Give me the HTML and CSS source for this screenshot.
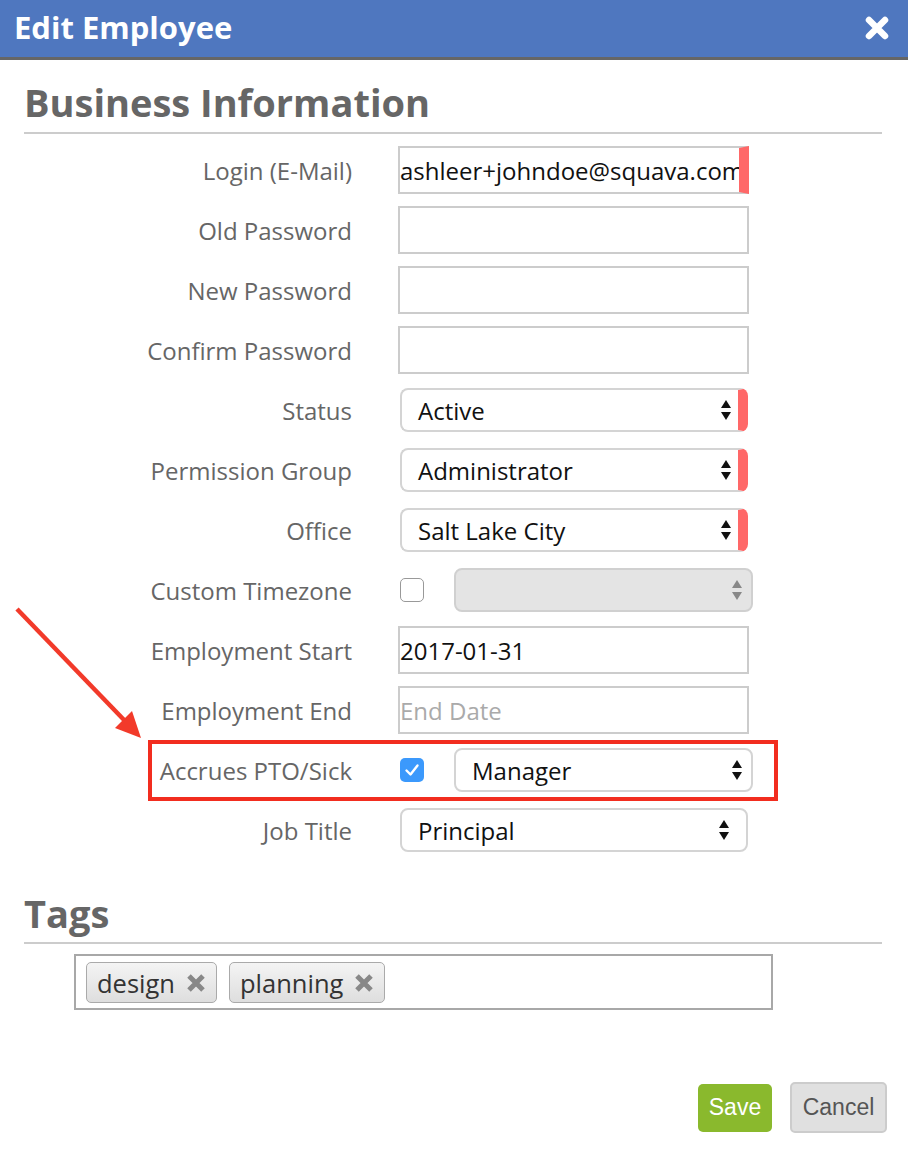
FILE: index.html
```html
<!DOCTYPE html>
<html lang="en">

<head>
    <meta charset="UTF-8">
    <meta name="viewport" content="width=device-width, initial-scale=1.0">
    <title>Edit Employee</title>
    <link rel="stylesheet" href="styles.css">
</head>

<body>

    <div class="modal">
        <div class="modal-header">
            <h1>Edit Employee</h1>
            <span class="close">
                <svg width="24" height="24" viewBox="0 0 24 24">
                    <path d="M4 4 L20 20 M20 4 L4 20" stroke="#fff" stroke-width="6.5" stroke-linecap="round" />
                </svg>
            </span>
        </div>

        <div class="modal-body">
            <h2 class="section-title">Business Information</h2>

            <div class="form">
                <div class="row">
                    <label>Login (E-Mail)</label>
                    <input class="text required" type="text" value="ashleer+johndoe@squava.com">
                </div>
                <div class="row">
                    <label>Old Password</label>
                    <input class="text" type="password">
                </div>
                <div class="row">
                    <label>New Password</label>
                    <input class="text" type="password">
                </div>
                <div class="row">
                    <label>Confirm Password</label>
                    <input class="text" type="password">
                </div>
                <div class="row">
                    <label>Status</label>
                    <div class="select required">
                        <span>Active</span>
                        <svg class="arrows" width="12" height="22" viewBox="0 0 12 22">
                            <path d="M6 1 L11 9 L1 9 Z M6 21 L11 13 L1 13 Z" fill="#111" />
                        </svg>
                    </div>
                </div>
                <div class="row">
                    <label>Permission Group</label>
                    <div class="select required">
                        <span>Administrator</span>
                        <svg class="arrows" width="12" height="22" viewBox="0 0 12 22">
                            <path d="M6 1 L11 9 L1 9 Z M6 21 L11 13 L1 13 Z" fill="#111" />
                        </svg>
                    </div>
                </div>
                <div class="row">
                    <label>Office</label>
                    <div class="select required">
                        <span>Salt Lake City</span>
                        <svg class="arrows" width="12" height="22" viewBox="0 0 12 22">
                            <path d="M6 1 L11 9 L1 9 Z M6 21 L11 13 L1 13 Z" fill="#111" />
                        </svg>
                    </div>
                </div>
                <div class="row">
                    <label>Custom Timezone</label>
                    <div class="combo">
                        <span class="checkbox"></span>
                        <div class="select wide disabled">
                            <span></span>
                            <svg class="arrows" width="12" height="22" viewBox="0 0 12 22">
                                <path d="M6 1 L11 9 L1 9 Z M6 21 L11 13 L1 13 Z" fill="#888" />
                            </svg>
                        </div>
                    </div>
                </div>
                <div class="row">
                    <label>Employment Start</label>
                    <input class="text" type="text" value="2017-01-31">
                </div>
                <div class="row">
                    <label>Employment End</label>
                    <input class="text" type="text" placeholder="End Date">
                </div>
                <div class="row highlighted">
                    <label>Accrues PTO/Sick</label>
                    <div class="combo">
                        <span class="checkbox checked">
                            <svg width="24" height="24" viewBox="0 0 24 24">
                                <path d="M6.5 12.5 L10.5 16.5 L17.5 7.5" fill="none" stroke="#fff" stroke-width="2.4" stroke-linecap="round" stroke-linejoin="round" />
                            </svg>
                        </span>
                        <div class="select wide">
                            <span>Manager</span>
                            <svg class="arrows" width="12" height="22" viewBox="0 0 12 22">
                                <path d="M6 1 L11 9 L1 9 Z M6 21 L11 13 L1 13 Z" fill="#111" />
                            </svg>
                        </div>
                    </div>
                    <div class="callout"></div>
                </div>
                <div class="row">
                    <label>Job Title</label>
                    <div class="select">
                        <span>Principal</span>
                        <svg class="arrows" width="12" height="22" viewBox="0 0 12 22">
                            <path d="M6 1 L11 9 L1 9 Z M6 21 L11 13 L1 13 Z" fill="#111" />
                        </svg>
                    </div>
                </div>
            </div>

            <h2 class="section-title tags-title">Tags</h2>

            <div class="tags">
                <span class="tag">design
                    <svg width="20" height="20" viewBox="0 0 20 20">
                        <path d="M3 3 L17 17 M17 3 L3 17" stroke="#888" stroke-width="5" />
                    </svg>
                </span>
                <span class="tag">planning
                    <svg width="20" height="20" viewBox="0 0 20 20">
                        <path d="M3 3 L17 17 M17 3 L3 17" stroke="#888" stroke-width="5" />
                    </svg>
                </span>
            </div>

            <div class="footer">
                <button class="btn save">Save</button>
                <button class="btn cancel">Cancel</button>
            </div>
        </div>

        <svg class="pointer" width="160" height="150" viewBox="0 0 160 150">
            <line x1="17" y1="9" x2="126" y2="122" stroke="#f23a2a" stroke-width="4.5" />
            <path d="M141 138 L115 128 L132 111 Z" fill="#f23a2a" />
        </svg>
    </div>

</body>

</html>
```

FILE: styles.css
```css
* {
    margin: 0;
    padding: 0;
    box-sizing: border-box;
}

html,
body {
    width: 100%;
    height: 100%;
    font-family: "Open Sans", "DejaVu Sans", sans-serif;
    background-color: #fff;
    overflow: hidden;
}

.modal {
    position: relative;
    width: 100%;
    height: 100%;
}

.modal-header {
    height: 60px;
    display: flex;
    align-items: center;
    justify-content: space-between;
    padding: 0 19px 3px 14px;
    background-color: #4f77bf;
    border-bottom: 3px solid #666;
}

.modal-header h1 {
    color: #fff;
    font-size: 31px;
    font-weight: 700;
}

.close {
    display: flex;
    margin-top: 1px;
}

.modal-body {
    padding: 0 26px 0 24px;
}

.section-title {
    margin-top: 19px;
    padding-bottom: 7px;
    font-size: 38px;
    line-height: 46px;
    font-weight: 700;
    color: #666;
    border-bottom: 2px solid #ccc;
}

.form {
    margin-top: 6px;
}

.row {
    position: relative;
    display: flex;
    align-items: center;
    height: 60px;
}

.row label {
    flex: none;
    width: 328px;
    margin-right: 46px;
    text-align: right;
    font-size: 24px;
    color: #666;
}

.text {
    width: 351px;
    height: 48px;
    padding: 0;
    border: 2px solid #ccc;
    outline: 0;
    font-family: "Open Sans", sans-serif;
    font-size: 24px;
    color: #111;
    background: #fff;
}

.text::placeholder {
    color: #aaa;
}

.text.required {
    border-right: 10px solid #ff6868;
}

.select {
    width: 348px;
    height: 44px;
    margin-left: 2px;
    display: flex;
    align-items: center;
    justify-content: space-between;
    padding: 0 16px 0 16px;
    border: 2px solid #d4d4d4;
    border-radius: 8px;
    font-size: 24px;
    color: #111;
    background: #fff;
}

.select.required {
    padding-right: 6px;
    border-right: 10px solid #ff6868;
}

.combo {
    display: flex;
    align-items: center;
    gap: 30px;
    margin-left: 2px;
}

.combo .select {
    margin-left: 0;
}

.select.wide {
    width: 299px;
    padding-right: 8px;
}

.select.disabled {
    background: #e4e4e4;
    border-color: #d0d0d0;
}

.checkbox {
    width: 24px;
    height: 24px;
    border: 1px solid #999;
    border-radius: 5px;
    background: #fff;
    display: flex;
}

.checkbox.checked {
    border: 0;
    background: #3b99fc;
}

.callout {
    position: absolute;
    left: 124px;
    top: 0;
    width: 630px;
    height: 61px;
    border: 4px solid #f22d1f;
}

.pointer {
    position: absolute;
    left: 0;
    top: 600px;
}

.tags-title {
    margin-top: 30px;
    padding-bottom: 6px;
}

.tags {
    margin: 10px 0 0 50px;
    width: 699px;
    height: 56px;
    display: flex;
    align-items: flex-start;
    gap: 12px;
    padding: 6px 10px;
    border: 2px solid #a8a8a8;
}

.tag {
    height: 41px;
    display: flex;
    align-items: center;
    gap: 11px;
    padding: 0 10px;
    font-size: 25.5px;
    color: #333;
    border: 1px solid #aaa;
    border-radius: 5px;
    background-image: linear-gradient(#f4f4f4, #dedede);
}

.footer {
    display: flex;
    justify-content: flex-end;
    align-items: center;
    gap: 18px;
    margin-top: 72px;
    margin-right: -5px;
}

.btn {
    cursor: pointer;
    font-family: "Liberation Sans", Arial, sans-serif;
    font-size: 23px;
    border-radius: 5px;
    outline: 0;
}

.save {
    width: 74px;
    height: 48px;
    border: 0;
    color: #fff;
    background-color: #8ab92d;
}

.cancel {
    width: 97px;
    height: 51px;
    color: #555;
    border: 2px solid #ccc;
    background-color: #e0e0e0;
}
```
